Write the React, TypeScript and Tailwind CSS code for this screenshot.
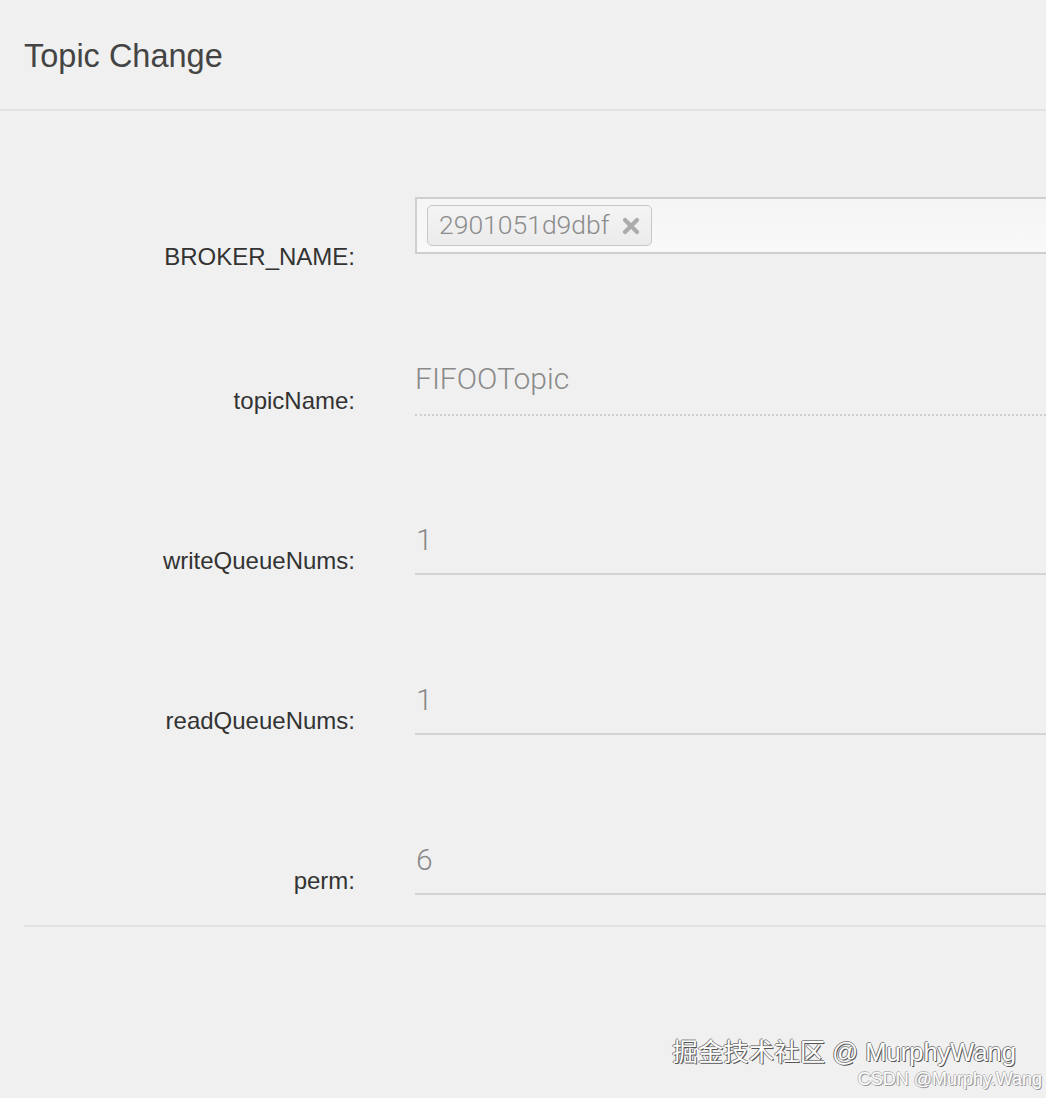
import React from "react";

const labelCls =
  "w-[355px] shrink-0 text-right text-[24px] leading-[28px] text-[#333] font-['Liberation_Sans',Arial,sans-serif]";
const valueCls =
  "text-[30px] leading-[34px] text-[#8a8a8a] font-light font-['Roboto','Liberation_Sans',sans-serif]";

function NumberRow({ label, value, mt }: { label: string; value: string; mt: string }) {
  return (
    <div className={`flex h-[54px] ${mt}`}>
      <div className={`${labelCls} pt-[26px]`}>{label}</div>
      <div className="ml-[60px] flex-1 -mr-6 h-[54px] border-b-2 border-[#d4d4d4] pl-[1px] pt-[2px]">
        <div className={valueCls}>{value}</div>
      </div>
    </div>
  );
}

export default function App() {
  return (
    <div className="relative min-h-screen w-full overflow-hidden bg-[#f0f0f0]">
      <div className="flex h-[111px] items-center border-b-2 border-[#e3e3e3] px-6 pt-[4px]">
        <h1 className="text-[32.5px] leading-none text-[#444] font-['Liberation_Sans',Arial,sans-serif]">
          Topic Change
        </h1>
      </div>

      <div className="pt-[86px]">
        {/* BROKER_NAME */}
        <div className="flex h-[57px]">
          <div className={`${labelCls} pt-[46px]`}>BROKER_NAME:</div>
          <div className="ml-[60px] flex-1 -mr-6 h-[57px] border-2 border-[#cfcfcf] bg-gradient-to-b from-[#f5f5f5] to-[#f9f9f9] px-[10px] pt-[6px]">
            <div className="inline-flex h-[41px] items-center gap-[12px] rounded-[5px] border border-[#c8c8c8] bg-gradient-to-b from-[#f4f4f4] to-[#ebebeb] pl-[11px] pr-[11px]">
              <span className="text-[26.5px] leading-none text-[#8c8c8c] font-light font-['Roboto','Liberation_Sans',sans-serif]">
                2901051d9dbf
              </span>
              <svg width="18" height="18" viewBox="0 0 18 18" className="mt-[1px]">
                <path d="M3 3 L15 15 M15 3 L3 15" stroke="#ababab" strokeWidth="4.2" strokeLinecap="round" />
              </svg>
            </div>
          </div>
        </div>

        {/* topicName */}
        <div className="mt-[107px] flex h-[55px]">
          <div className={`${labelCls} pt-[26px]`}>topicName:</div>
          <div className="ml-[60px] flex-1 -mr-6 h-[55px] border-b-2 border-dotted border-[#cfcfcf] pt-[1px]">
            <div className={valueCls}>FIFOOTopic</div>
          </div>
        </div>

        <NumberRow label="writeQueueNums:" value="1" mt="mt-[105px]" />
        <NumberRow label="readQueueNums:" value="1" mt="mt-[106px]" />
        <NumberRow label="perm:" value="6" mt="mt-[106px]" />

        <div className="ml-6 mt-[30px] h-0 border-t-2 border-[#e3e3e3]" />
      </div>

      {/* watermark overlay */}
      <div className="absolute right-[4px] top-[1035px] flex flex-col items-end">
        <div className="mr-[26px] text-[25.5px] leading-[34px] text-white font-['Liberation_Sans','Noto_Sans_CJK_SC',sans-serif] [text-shadow:1px_1px_0_#555,-1px_0_0_#777,0_-1px_0_#888]">
          掘金技术社区 @ MurphyWang
        </div>
        <div className="-mt-[1px] text-[18px] leading-[22px] text-white font-['Liberation_Sans',sans-serif] [text-shadow:1px_1px_0_#999,-1px_0_0_#bbb,0_-1px_0_#bbb]">
          CSDN @Murphy.Wang
        </div>
      </div>
    </div>
  );
}
